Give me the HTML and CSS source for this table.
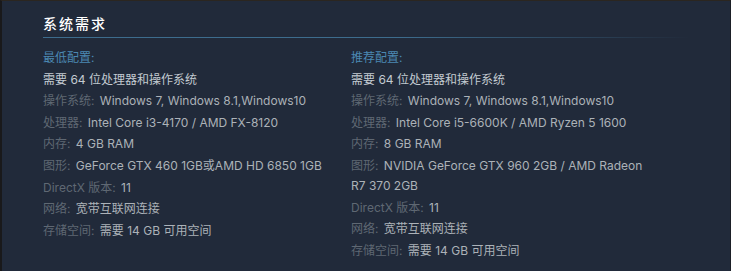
FILE: index.html
```html
<!DOCTYPE html>
<html lang="zh-CN">
<head>
<meta charset="utf-8">
<title>系统需求</title>
<link rel="stylesheet" href="styles.css">
</head>
<body>
<div class="panel">
  <h2 class="title">系统需求</h2>
  <div class="cols">
    <ul class="req">
      <li class="head">最低配置:</li>
      <li class="val">需要 64 位处理器和操作系统</li>
      <li><span class="lbl">操作系统:</span> Windows 7, Windows 8.1,Windows10</li>
      <li><span class="lbl">处理器:</span> Intel Core i3-4170 / AMD FX-8120</li>
      <li><span class="lbl">内存:</span> 4 GB RAM</li>
      <li><span class="lbl">图形:</span> GeForce GTX 460 1GB或AMD HD 6850 1GB</li>
      <li><span class="lbl">DirectX 版本:</span> 11</li>
      <li><span class="lbl">网络:</span> 宽带互联网连接</li>
      <li><span class="lbl">存储空间:</span> 需要 14 GB 可用空间</li>
    </ul>
    <ul class="req">
      <li class="head">推荐配置:</li>
      <li class="val">需要 64 位处理器和操作系统</li>
      <li><span class="lbl">操作系统:</span> Windows 7, Windows 8.1,Windows10</li>
      <li><span class="lbl">处理器:</span> Intel Core i5-6600K / AMD Ryzen 5 1600</li>
      <li><span class="lbl">内存:</span> 8 GB RAM</li>
      <li><span class="lbl">图形:</span> NVIDIA GeForce GTX 960 2GB / AMD Radeon R7 370 2GB</li>
      <li><span class="lbl">DirectX 版本:</span> 11</li>
      <li><span class="lbl">网络:</span> 宽带互联网连接</li>
      <li><span class="lbl">存储空间:</span> 需要 14 GB 可用空间</li>
    </ul>
  </div>
</div>
</body>
</html>
```

FILE: styles.css
```css
html, body {
  margin: 0;
  padding: 0;
  background: #212a3a;
}
.panel {
  box-sizing: border-box;
  width: 731px;
  height: 271px;
  background: #212a3a;
  border-left: 2px solid #19191b;
  border-top: 1px solid #2b2620;
  border-right: 1px solid #1b1f27;
  padding: 12px 0 0 41px;
  font-family: "Inter", "Noto Sans CJK SC", sans-serif;
  font-size: 12px;
  color: #acb2b8;
}
.title {
  margin: 0;
  width: 646px;
  font-family: "Noto Sans CJK SC", sans-serif;
  font-size: 14px;
  font-weight: 500;
  line-height: 20px;
  letter-spacing: 2px;
  color: #ffffff;
  padding-bottom: 4px;
  border-bottom: 1px solid transparent;
  border-image: linear-gradient(to right, #3d6c8d 0%, #3d6c8d 55%, rgba(61,108,141,0) 100%) 1;
}
.cols {
  display: grid;
  grid-template-columns: 300px 300px;
  column-gap: 8px;
  margin-top: 10px;
}
.req {
  list-style: none;
  margin: 0;
  padding: 0;
}
.req li {
  line-height: 20px;
  margin-bottom: 1.6px;
}
.req li.head {
  color: #4b88b2;
}
.req li.val {
  color: #c3cad1;
}
.lbl {
  color: #5f6873;
  margin-right: 2px;
}
```
